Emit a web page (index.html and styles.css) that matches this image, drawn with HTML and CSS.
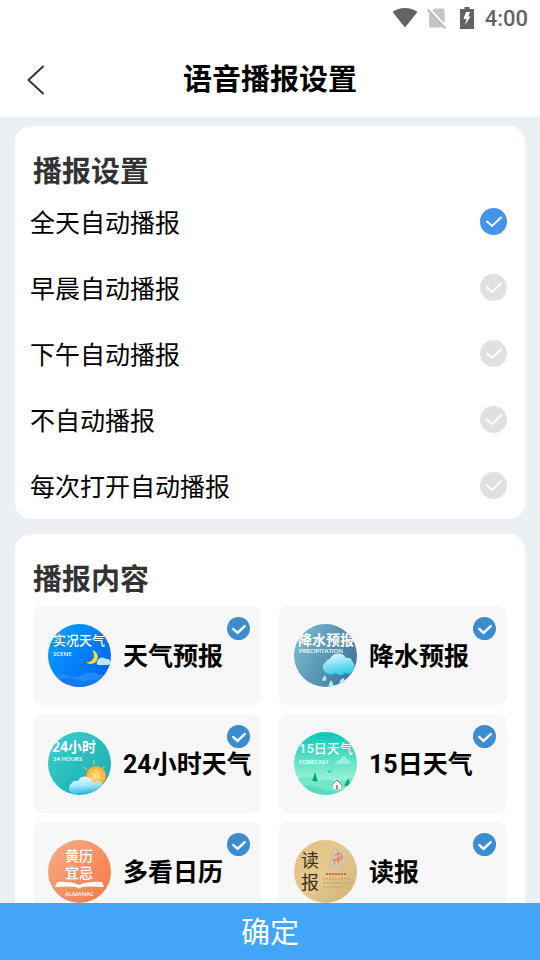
FILE: index.html
```html
<!DOCTYPE html>
<html lang="zh-CN">
<head>
    <meta charset="UTF-8">
    <meta name="viewport" content="width=device-width, initial-scale=1.0">
    <title>语音播报设置</title>
    <link rel="stylesheet" href="styles.css">
</head>
<body>
    <!-- Status bar -->
    <div class="status-bar">
        <svg class="status-wifi" width="26" height="22" viewBox="0 0 26 22">
            <path d="M0.5 5C7.5-0.5 18.500-0.5 25.5 5L13 20.5Z" fill="#636363"/>
        </svg>
        <svg class="status-sim" width="20" height="22" viewBox="0 0 20 22">
            <path d="M7.5 1.5H16a1.5 1.5 0 0 1 1.5 1.5V19a1.5 1.5 0 0 1-1.5 1.5H3.5A1.5 1.5 0 0 1 2 19V7Z" fill="#c4c4c4"/>
            <path d="M1.5 1L20 20.5" stroke="#fff" stroke-width="2"/>
            <path d="M0.5 2.5L18.5 21.5" stroke="#bcbcbc" stroke-width="2"/>
        </svg>
        <svg class="status-battery" width="14" height="22" viewBox="0 0 14 22">
            <path d="M4.5 0h5v2H14v20H0V2h4.5Z" fill="#636363"/>
            <path d="M6 5h4L8.500 9.500h2L5 18l1.500-6h-3Z" fill="#fff"/>
        </svg>
        <span class="status-time">4:00</span>
    </div>

    <!-- Title bar -->
    <header class="title-bar">
        <button class="back-btn" type="button" aria-label="返回">
            <svg width="18" height="30" viewBox="0 0 18 30">
                <path d="M16 1.5L1.5 15L16 28.5" fill="none" stroke="#333" stroke-width="2" stroke-linecap="round" stroke-linejoin="round"/>
            </svg>
        </button>
        <h1>语音播报设置</h1>
    </header>

    <main class="content">
        <!-- When to broadcast -->
        <section class="card">
            <h2>播报设置</h2>
            <label class="option"><span>全天自动播报</span><input class="option-check" type="radio" name="mode" checked></label>
            <label class="option"><span>早晨自动播报</span><input class="option-check" type="radio" name="mode"></label>
            <label class="option"><span>下午自动播报</span><input class="option-check" type="radio" name="mode"></label>
            <label class="option"><span>不自动播报</span><input class="option-check" type="radio" name="mode"></label>
            <label class="option"><span>每次打开自动播报</span><input class="option-check" type="radio" name="mode"></label>
        </section>

        <!-- What to broadcast -->
        <section class="card">
            <h2>播报内容</h2>
            <div class="tiles">
                <label class="tile">
                    <svg class="tile-art" viewBox="0 0 63 63" aria-hidden="true">
                        <defs>
                            <linearGradient id="scene" x1="0" y1="0" x2="1" y2="0.7">
                                <stop offset="0" stop-color="#07a5fa"/>
                                <stop offset="0.5" stop-color="#0685fb"/>
                                <stop offset="1" stop-color="#0464f8"/>
                            </linearGradient>
                        </defs>
                        <rect width="63" height="63" fill="url(#scene)"/>
                        <path d="M0 54C8 49 12 49 18 51S28 54 34 51S45 48 50 50S58 51 63 48V63H0Z" fill="#1c8cfa"/>
                        <path d="M6 57C16 52 22 54 29 56S43 57 56 53V63H6Z" fill="#1479f3"/>
                        <path d="M44 26a7 7 0 1 1-6 12c5 1 8-3 8-6s-1-5-2-6Z" fill="#ffdf25"/>
                        <path d="M50 41a3 3 0 0 1 0-5a5 5 0 0 1 8-1a3 3 0 0 1 2 6Z" fill="#b9e7ff"/>
                        <text class="art-title" x="5" y="21" font-size="13">实况天气</text>
                        <text class="art-sub" x="5" y="32" font-size="6">SCENE</text>
                    </svg>
                    <span>天气预报</span>
                    <input class="tile-check" type="checkbox" checked>
                </label>

                <label class="tile">
                    <svg class="tile-art" viewBox="0 0 63 63" aria-hidden="true">
                        <defs>
                            <linearGradient id="rain" x1="0" y1="0.3" x2="1" y2="0.8">
                                <stop offset="0" stop-color="#74bace"/>
                                <stop offset="1" stop-color="#416f98"/>
                            </linearGradient>
                            <linearGradient id="rain-cloud" x1="0" y1="0" x2="0.3" y2="1">
                                <stop offset="0" stop-color="#effcff"/>
                                <stop offset="1" stop-color="#35cdea"/>
                            </linearGradient>
                        </defs>
                        <rect width="63" height="63" fill="url(#rain)"/>
                        <path d="M33 49a6 6 0 0 1-1-11q1-3 4-3a9 9 0 0 1 16-1q5-1 6 3a7 7 0 0 1 0 11q-3 3-7 1q-5 4-9 0q-5 3-9 0Z" fill="url(#rain-cloud)"/>
                        <path d="M31 51q-5 6-1 6t1-6M37 56q-5 8 0 8q5-1 0-8M50 54q-6 2-4 6q5 1 4-6" fill="#a4edfa"/>
                        <text class="art-title art-bold" x="4" y="21" font-size="14">降水预报</text>
                        <text class="art-sub" x="5" y="29" font-size="6">PRECIPITATION</text>
                    </svg>
                    <span>降水预报</span>
                    <input class="tile-check" type="checkbox" checked>
                </label>

                <label class="tile">
                    <svg class="tile-art" viewBox="0 0 63 63" aria-hidden="true">
                        <defs>
                            <linearGradient id="hours" x1="0" y1="0" x2="1" y2="1">
                                <stop offset="0" stop-color="#3bd1d0"/>
                                <stop offset="1" stop-color="#18a9ad"/>
                            </linearGradient>
                            <linearGradient id="hours-cloud" x1="0.3" y1="0" x2="0.5" y2="1">
                                <stop offset="0" stop-color="#edfbff"/>
                                <stop offset="0.5" stop-color="#a5e8fb"/>
                                <stop offset="1" stop-color="#20b5e8"/>
                            </linearGradient>
                            <radialGradient id="sun">
                                <stop offset="0" stop-color="#ffe58d"/>
                                <stop offset="1" stop-color="#ffa82d"/>
                            </radialGradient>
                        </defs>
                        <rect width="63" height="63" fill="url(#hours)"/>
                        <circle cx="48" cy="44" r="10" fill="url(#sun)"/>
                        <path d="M46 29v3M36 35l2 2M56 35l-2 2" stroke="#ffb13d" stroke-width="1.5" stroke-linecap="round"/>
                        <path d="M26 62a6 6 0 0 1-2-11q1-3 6-2a8 8 0 0 1 15 2q7-4 11 3l-3 7Z" fill="url(#hours-cloud)"/>
                        <text class="art-title art-bold" x="4" y="20" font-size="14">24小时</text>
                        <text class="art-sub" x="5" y="29" font-size="6">24 HOURS</text>
                    </svg>
                    <span>24小时天气</span>
                    <input class="tile-check" type="checkbox" checked>
                </label>

                <label class="tile">
                    <svg class="tile-art" viewBox="0 0 63 63" aria-hidden="true">
                        <defs>
                            <linearGradient id="forecast" x1="0" y1="0" x2="0" y2="1">
                                <stop offset="0" stop-color="#04c9b5"/>
                                <stop offset="0.8" stop-color="#a3f4d6"/>
                            </linearGradient>
                        </defs>
                        <rect width="63" height="63" fill="url(#forecast)"/>
                        <path d="M41 32q1-3 5-4l2-3q4-2 5 2q3 1 4 5Z" fill="#98f0df"/>
                        <path d="M33 38l3 1l3-2l-2 3l-2 1Z" fill="#30c5a1"/>
                        <path d="M0 49q10-8 24 0q12-3 17 1l22-5v18H0Z" fill="#71e8c8"/>
                        <path d="M0 55q12-4 28 2t35-4v10H0Z" fill="#57dcc0"/>
                        <path d="M21 40l-3 9h6ZM53 48l-3 6h5ZM54 46l-2 7h5Z" fill="#06ae7b"/>
                        <path d="M21 46v4" stroke="#278b64"/>
                        <path d="M39 52l4-4l4 4v5h-8Z" fill="#fff"/>
                        <path d="M38 53l5-5l5 5" fill="none" stroke="#9c6964"/>
                        <path d="M42 53h2v4h-2Z" fill="#ee725c"/>
                        <text class="art-title" x="5" y="21" font-size="13">15日天气</text>
                        <text class="art-sub" x="5" y="32" font-size="6">FORECAST</text>
                    </svg>
                    <span>15日天气</span>
                    <input class="tile-check" type="checkbox" checked>
                </label>

                <label class="tile">
                    <svg class="tile-art" viewBox="0 0 63 63" aria-hidden="true">
                        <defs>
                            <linearGradient id="almanac" x1="0" y1="0" x2="1" y2="1">
                                <stop offset="0" stop-color="#f6ae89"/>
                                <stop offset="1" stop-color="#f47742"/>
                            </linearGradient>
                        </defs>
                        <rect width="63" height="63" fill="url(#almanac)"/>
                        <path d="M9 42q14-1 22 3q9-4 23-3l2 5q-16-1-22 0q-3 3-6 0q-7-1-21 0Z" fill="#fff"/>
                        <text class="art-title" x="17" y="21" font-size="14">黄历</text>
                        <text class="art-title" x="17" y="38" font-size="14">宜忌</text>
                        <text class="art-sub" x="17" y="56" font-size="6">ALMANAC</text>
                    </svg>
                    <span>多看日历</span>
                    <input class="tile-check" type="checkbox" checked>
                </label>

                <label class="tile">
                    <svg class="tile-art" viewBox="0 0 63 63" aria-hidden="true">
                        <defs>
                            <linearGradient id="paper" x1="0" y1="0" x2="1" y2="1">
                                <stop offset="0" stop-color="#dfc080"/>
                                <stop offset="0.5" stop-color="#e6c991"/>
                                <stop offset="1" stop-color="#cfae70"/>
                            </linearGradient>
                        </defs>
                        <rect width="63" height="63" fill="url(#paper)"/>
                        <g transform="rotate(16 44 19)">
                            <rect x="37" y="10" width="14" height="18" fill="#d9c8a7" stroke="#c0b396" stroke-dasharray="1 1"/>
                            <path d="M40 17q4-7 7-2q3 4-3 5q-5 3-1 5M39 22l8-6M42 12l4 12" fill="none" stroke="#df7766"/>
                        </g>
                        <path d="M32 34h20" stroke="#dc5b43" stroke-width="2" stroke-dasharray="2 1"/>
                        <path d="M29 39h28M29 43h28M29 47h19" stroke="#b99d68" stroke-dasharray="2 1"/>
                        <text class="art-ink" x="7" y="27" font-size="18">读</text>
                        <text class="art-ink" x="7" y="49" font-size="18">报</text>
                    </svg>
                    <span>读报</span>
                    <input class="tile-check" type="checkbox" checked>
                </label>
            </div>
        </section>
    </main>

    <button class="confirm-btn" type="button">确定</button>
</body>
</html>
```

FILE: styles.css
```css
* {
    margin: 0;
    padding: 0;
    box-sizing: border-box;
}

body {
    font-family: Roboto, "Noto Sans CJK SC", sans-serif;
    background-color: #fff;
    color: #000;
    height: 100vh;
    display: flex;
    flex-direction: column;
}

button,
input {
    font-family: inherit;
    appearance: none;
    border: none;
    cursor: pointer;
}

/* === STATUS BAR === */
.status-bar {
    height: 36px;
    padding-right: 12px;
    display: flex;
    flex-shrink: 0;
    justify-content: flex-end;
    align-items: center;
    color: #636363;
}

.status-sim {
    margin-left: 9px;
}

.status-battery {
    margin-left: 13px;
}

.status-time {
    margin-left: 11px;
    font-size: 22px;
    font-weight: 500;
}

/* === TITLE BAR === */
.title-bar {
    height: 81px;
    padding: 7px 20px 0;
    display: grid;
    grid-template-columns: 32px 1fr 32px;
    flex-shrink: 0;
    align-items: center;
}

.back-btn {
    height: 48px;
    display: flex;
    align-items: center;
    justify-content: center;
    background: none;
}

.title-bar h1 {
    font-size: 29px;
    line-height: 44px;
    text-align: center;
}

/* === CONTENT === */
.content {
    flex: 1;
    min-height: 0;
    padding: 9px 15px 15px;
    overflow-y: auto;
    scrollbar-width: none;
    background-color: #ecf0f3;
}

.card {
    margin-bottom: 15px;
    padding-bottom: 1px;
    background-color: #fff;
    border-radius: 16px;
}

.card h2 {
    padding: 30px 18px 0;
    font-size: 29px;
    line-height: 32px;
    color: #333;
}

.option {
    height: 66px;
    padding: 0 18px 0 15px;
    display: flex;
    justify-content: space-between;
    align-items: center;
    font-size: 25px;
    cursor: pointer;
}

.option-check {
    width: 27px;
    height: 27px;
    border-radius: 50%;
    background: #e0e0e0 url("data:image/svg+xml,%3Csvg xmlns='http://www.w3.org/2000/svg' viewBox='0 0 27 27'%3E%3Cpath d='M7 13.5l5 4.5l9-8.5' fill='none' stroke='%23fff' stroke-width='2' stroke-linecap='round'/%3E%3C/svg%3E");
}

.option-check:checked {
    background-color: #4293ec;
}

/* === TILES === */
.tiles {
    padding: 10px 18px 18px;
    display: grid;
    grid-template-columns: 1fr 1fr;
    gap: 9px 18px;
}

.tile {
    position: relative;
    height: 99px;
    padding-left: 15px;
    display: flex;
    align-items: center;
    gap: 12px;
    background-color: #f7f7f7;
    border-radius: 9px;
    font-size: 25px;
    font-weight: 700;
    white-space: nowrap;
    cursor: pointer;
}

.tile span {
    padding-bottom: 3px;
}

.tile-art {
    width: 63px;
    height: 63px;
    flex-shrink: 0;
    border-radius: 50%;
}

.art-title {
    fill: #fff;
    font-weight: 500;
}

.art-bold {
    font-weight: 700;
}

.art-sub {
    fill: #fff;
    font-family: "Open Sans", sans-serif;
    font-weight: 600;
}

.art-ink {
    fill: #38301f;
    font-weight: 400;
}

/* Tick in the corner of a tile */
.tile-check {
    position: absolute;
    top: 11px;
    right: 11px;
    width: 23px;
    height: 23px;
    border-radius: 50%;
    background-color: #ddd;
}

.tile-check:checked {
    background: #3c8dce url("data:image/svg+xml,%3Csvg xmlns='http://www.w3.org/2000/svg' viewBox='0 0 24 24'%3E%3Cpath d='M6.5 12.5l4.5 4l7.5-7' fill='none' stroke='%23fff' stroke-width='2.5' stroke-linecap='round'/%3E%3C/svg%3E");
}

/* === BOTTOM BUTTON === */
.confirm-btn {
    height: 57px;
    padding-bottom: 3px;
    flex-shrink: 0;
    background-color: #42a5f6;
    color: #fff;
    font-size: 29px;
}
```
